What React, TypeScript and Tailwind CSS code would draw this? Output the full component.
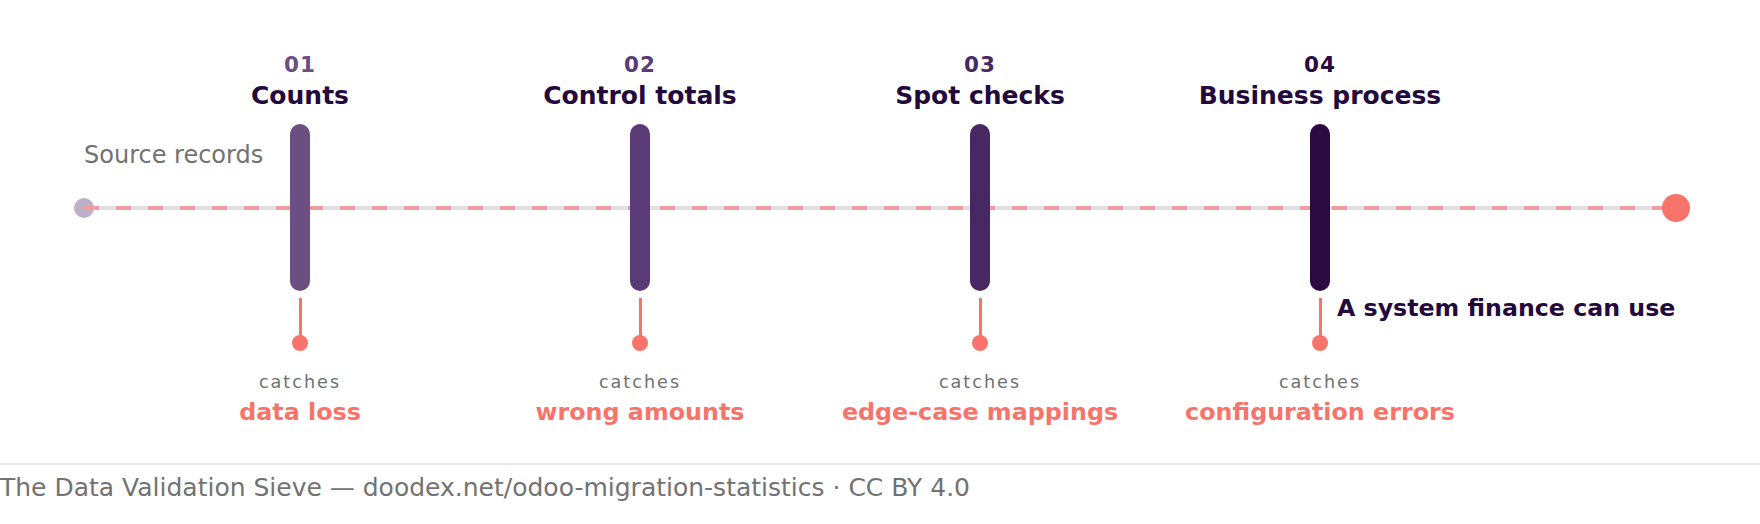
const stages = [
  { num: "01", title: "Counts", catches: "data loss", color: "bg-[#6b4f83]", numColor: "text-[#6b4f83]" },
  { num: "02", title: "Control totals", catches: "wrong amounts", color: "bg-[#5a3b78]", numColor: "text-[#5a3b78]" },
  { num: "03", title: "Spot checks", catches: "edge-case mappings", color: "bg-[#472863]", numColor: "text-[#472863]" },
  { num: "04", title: "Business process", catches: "configuration errors", color: "bg-[#2b0941]", numColor: "text-[#2b0941]" },
];

function Track() {
  return (
    <svg className="absolute inset-0 h-full w-full" viewBox="0 0 1760 463" preserveAspectRatio="none">
      <circle cx="84" cy="208" r="10" fill="#bdb1ca" />
      <line x1="84" y1="208" x2="1676" y2="208" stroke="#e3dde6" strokeWidth="4" />
      <line
        x1="84"
        y1="208"
        x2="1676"
        y2="208"
        stroke="#f8736a"
        strokeOpacity="0.6"
        strokeWidth="4"
        strokeDasharray="15 17"
      />
      <circle cx="1676" cy="208" r="14" fill="#f8736a" />
    </svg>
  );
}

export default function App() {
  return (
    <div className="w-[1760px] bg-white font-['DejaVu_Sans',sans-serif]">
      <div className="relative h-[463px]">
        <Track />
        <div className="absolute left-[84px] top-[143px] text-[24px] leading-[24px] text-[#727272]">
          Source records
        </div>
        <div className="relative grid grid-cols-[repeat(4,340px)] pl-[130px]">
          {stages.map((s) => (
            <div key={s.num} className="flex flex-col items-center pt-[54px]">
              <div className={`text-[21.5px] leading-[21px] font-bold tracking-[1px] ${s.numColor}`}>{s.num}</div>
              <div className="mt-[8px] text-[25px] leading-[25px] font-bold whitespace-nowrap text-[#240a3c]">
                {s.title}
              </div>
              <div className={`mt-[16px] h-[167px] w-5 rounded-full ${s.color}`} />
              <div className="mt-[7px] h-[45px] w-[3px] bg-[#f8736a]" />
              <div className="-mt-2 h-4 w-4 rounded-full bg-[#f8736a]" />
              <div className="mt-[22px] text-[17.6px] leading-[18px] tracking-[2px] text-[#707070]">catches</div>
              <div className="mt-[9px] text-[23.8px] leading-[24px] font-bold whitespace-nowrap text-[#f8736a]">
                {s.catches}
              </div>
            </div>
          ))}
        </div>
        <div className="absolute left-[1337px] top-[296px] text-[23.7px] leading-[24px] font-bold whitespace-nowrap text-[#240a3c]">
          A system finance can use
        </div>
      </div>
      <div className="h-[61px] border-t-2 border-[#e6e6e6] pt-[10px] text-[25px] leading-[25px] whitespace-nowrap text-[#727272]">
        The Data Validation Sieve — doodex.net/odoo-migration-statistics · CC BY 4.0
      </div>
    </div>
  );
}
